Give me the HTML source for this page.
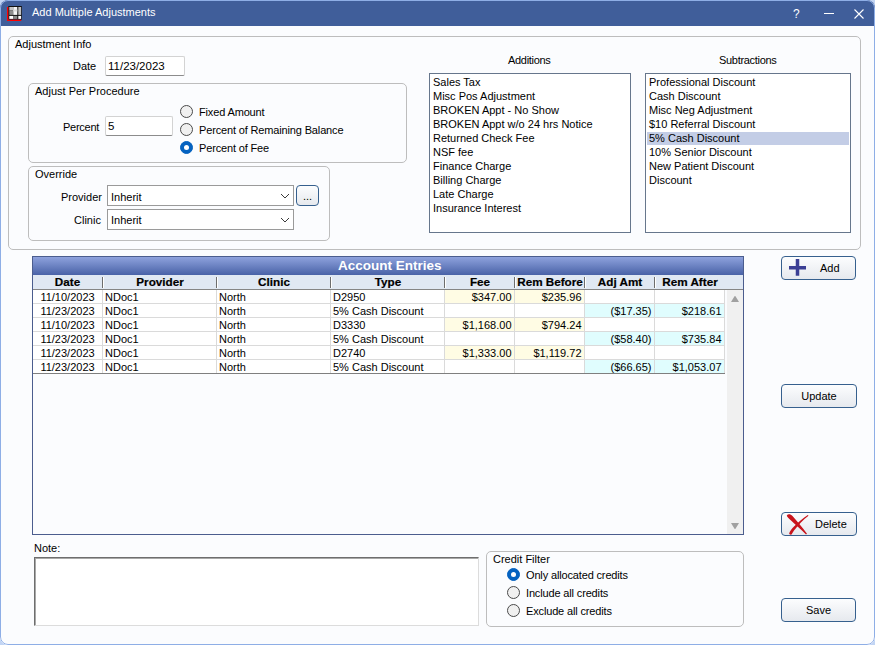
<!DOCTYPE html>
<html><head><meta charset="utf-8">
<style>
*{box-sizing:border-box;margin:0;padding:0}
html,body{width:875px;height:645px;overflow:hidden;background:#c2d5f4}
body{font-family:"Liberation Sans",sans-serif;font-size:11px;color:#000;position:relative}
.a{position:absolute;white-space:nowrap;line-height:13px}
#win{position:absolute;left:0;top:0;width:875px;height:645px;background:#fbfcfe;border-radius:8px 8px 8px 8px;overflow:hidden}
#wb{position:absolute;left:0;top:0;width:875px;height:645px;border:1px solid #8eaee6;border-radius:8px 8px 8px 8px;z-index:50}
#title{position:absolute;left:0;top:0;width:875px;height:26px;background:#405e9a}
.grp{position:absolute;border:1px solid #bdbdbd;border-radius:5px}
.inp{position:absolute;background:#fff;border:1px solid #d3d3d3;border-bottom-color:#8c8c8c;border-radius:2px}
.radio{position:absolute;width:13px;height:13px;border-radius:50%;border:1px solid #4a4a4a;background:#f0f0f0}
.radio.on{background:#0562c0;border-color:#0562c0}
.radio.on:after{content:"";position:absolute;left:3px;top:3px;width:5px;height:5px;border-radius:50%;background:#fff}
.list{position:absolute;background:#fff;border:1px solid #66768c}
.list div{height:14px;line-height:12px;padding-left:2px;white-space:nowrap}
.btn{position:absolute;border:1px solid #36608e;border-radius:4px;background:linear-gradient(#fcfdfe,#e6e9ee);text-align:center;font-size:11px}
#grid{position:absolute;left:32px;top:256px;width:712px;height:279px;border:1px solid #4b5d8e;background:#fbfcfe}
#gtitle{position:absolute;left:0;top:0;width:710px;height:18px;background:linear-gradient(#8ea2dd,#4962a7);color:#fff;font-weight:bold;font-size:13.5px;text-align:center;line-height:18px}
#ghead{position:absolute;left:0;top:18px;width:710px;height:15px;background:#e0e8f3;border-bottom:1px solid #858585}
.hc{position:absolute;top:0;height:14px;line-height:14px;font-weight:bold;font-size:11.7px;text-align:center;-webkit-text-stroke:0.2px #000}
.hs{position:absolute;top:2px;width:2px;height:11px;border-left:1px solid #6e6e6e;border-right:1px solid #fff}
.row{position:absolute;left:0;width:692px;height:13px;background:#fff}
.c{position:absolute;top:0;height:13px;line-height:15px;padding:0 2px;white-space:nowrap}
.r{text-align:right;padding-right:2.5px}
.vl{position:absolute;top:0;width:1px;height:83px;background:#dadada}
.hl{position:absolute;left:0;width:692px;height:1px;background:#d9d9d9}
.y{background:#fffce4}
.cy{background:#e0fdfe}
</style></head><body>
<div id="win">
  <div id="title">
    <svg class="a" style="left:7px;top:6px" width="16" height="16" viewBox="0 0 16 16">
      <rect x="1.3" y="0" width="13.5" height="13.7" fill="#111"/>
      <rect x="2.3" y="1" width="4" height="3.5" fill="#c4c4c4"/><rect x="2.3" y="4.5" width="4" height="4.4" fill="#8e8e8e"/>
      <rect x="6.3" y="1" width="4" height="7.9" fill="#f6f6f6"/><rect x="6.3" y="3.5" width="4" height="2" fill="#dcdcdc"/>
      <rect x="11.3" y="1" width="2.8" height="7.9" fill="#c0c0c0"/>
      <rect x="2.3" y="9.9" width="4" height="3" fill="#fff"/><rect x="6.3" y="9.9" width="4" height="3" fill="#8a8a8a"/><rect x="11.3" y="9.9" width="2.8" height="3" fill="#fff"/>
      <rect x="0" y="1" width="1.3" height="14" fill="#f00"/><rect x="0" y="13.7" width="14.2" height="1.3" fill="#f00"/>
    </svg>
    <div class="a" style="left:32px;top:6px;color:#fff;font-size:11px">Add Multiple Adjustments</div>
    <div class="a" style="left:793px;top:8px;color:#fff;font-size:12px">?</div>
    <div class="a" style="left:824px;top:13px;width:10px;height:1px;background:#fff"></div>
    <svg class="a" style="left:853px;top:8px" width="12" height="12" viewBox="0 0 12 12"><path d="M1.5 1.5L10.5 10.5M10.5 1.5L1.5 10.5" stroke="#fff" stroke-width="1.1"/></svg>
  </div>

  <!-- Adjustment Info -->
  <div class="grp" style="left:8px;top:36px;width:853px;height:214px"></div>
  <div class="a" style="left:15px;top:38px;font-size:11px">Adjustment Info</div>
  <div class="a" style="left:73px;top:60px">Date</div>
  <div class="inp" style="left:105px;top:56px;width:80px;height:20px"></div>
  <div class="a" style="left:108px;top:60px;font-size:11.5px">11/23/2023</div>

  <div class="grp" style="left:28px;top:83px;width:379px;height:80px"></div>
  <div class="a" style="left:35px;top:85px;font-size:11px">Adjust Per Procedure</div>
  <div class="a" style="left:63px;top:121px;letter-spacing:-0.25px">Percent</div>
  <div class="inp" style="left:105px;top:116px;width:68px;height:20px"></div>
  <div class="a" style="left:108px;top:120px;font-size:11.5px">5</div>
  <div class="radio" style="left:180px;top:105px"></div>
  <div class="a" style="left:199px;top:106px;letter-spacing:-0.15px">Fixed Amount</div>
  <div class="radio" style="left:180px;top:123px"></div>
  <div class="a" style="left:199px;top:124px;letter-spacing:-0.15px">Percent of Remaining Balance</div>
  <div class="radio on" style="left:180px;top:141px"></div>
  <div class="a" style="left:199px;top:142px;letter-spacing:-0.15px">Percent of Fee</div>

  <div class="grp" style="left:28px;top:166px;width:302px;height:75px"></div>
  <div class="a" style="left:35px;top:168px;font-size:11px">Override</div>
  <div class="a" style="left:61px;top:191px">Provider</div>
  <div class="inp" style="left:107px;top:185px;width:187px;height:21px;border-color:#9a9a9a;border-radius:0"></div>
  <div class="a" style="left:111px;top:191px">Inherit</div>
  <svg class="a" style="left:280px;top:193px" width="10" height="6" viewBox="0 0 10 6"><path d="M1 1L5 5L9 1" fill="none" stroke="#3a3a3a" stroke-width="1"/></svg>
  <div class="btn" style="left:296px;top:185px;width:23px;height:21px;font-size:11px;line-height:21px;color:#000">...</div>
  <div class="a" style="left:74px;top:214px">Clinic</div>
  <div class="inp" style="left:107px;top:209px;width:187px;height:21px;border-color:#9a9a9a;border-radius:0"></div>
  <div class="a" style="left:111px;top:214px">Inherit</div>
  <svg class="a" style="left:280px;top:217px" width="10" height="6" viewBox="0 0 10 6"><path d="M1 1L5 5L9 1" fill="none" stroke="#3a3a3a" stroke-width="1"/></svg>

  <div class="a" style="left:508px;top:54px;letter-spacing:-0.3px">Additions</div>
  <div class="list" style="left:429px;top:73px;width:202px;height:160px;padding:2px 1px">
    <div>Sales Tax</div><div>Misc Pos Adjustment</div><div>BROKEN Appt - No Show</div><div>BROKEN Appt w/o 24 hrs Notice</div><div>Returned Check Fee</div><div>NSF fee</div><div>Finance Charge</div><div>Billing Charge</div><div>Late Charge</div><div>Insurance Interest</div>
  </div>
  <div class="a" style="left:719px;top:54px;letter-spacing:-0.3px">Subtractions</div>
  <div class="list" style="left:645px;top:73px;width:206px;height:160px;padding:2px 1px">
    <div>Professional Discount</div><div>Cash Discount</div><div>Misc Neg Adjustment</div><div>$10 Referral Discount</div><div style="background:linear-gradient(#c3cde6 13px,transparent 13px)">5% Cash Discount</div><div>10% Senior Discount</div><div>New Patient Discount</div><div>Discount</div>
  </div>

  <!-- Grid -->
  <div id="grid">
    <div id="gtitle"><span style="position:absolute;left:305px">Account Entries</span></div>
    <div id="ghead">
      <div class="hc" style="left:0;width:69px">Date</div>
      <div class="hs" style="left:69px"></div>
      <div class="hc" style="left:71px;width:112px">Provider</div>
      <div class="hs" style="left:183px"></div>
      <div class="hc" style="left:185px;width:112px">Clinic</div>
      <div class="hs" style="left:297px"></div>
      <div class="hc" style="left:299px;width:112px">Type</div>
      <div class="hs" style="left:411px"></div>
      <div class="hc" style="left:413px;width:68px">Fee</div>
      <div class="hs" style="left:481px"></div>
      <div class="hc" style="left:483px;width:68px">Rem Before</div>
      <div class="hs" style="left:551px"></div>
      <div class="hc" style="left:553px;width:68px">Adj Amt</div>
      <div class="hs" style="left:621px"></div>
      <div class="hc" style="left:623px;width:68px">Rem After</div>
    </div>
    <div id="rows" style="position:absolute;left:0;top:33px">
<div class="row" style="top:0px">
<div class="c" style="left:0px;width:69px;text-align:center">11/10/2023</div>
<div class="c" style="left:70px;width:113px">NDoc1</div>
<div class="c" style="left:184px;width:113px">North</div>
<div class="c" style="left:298px;width:113px">D2950</div>
<div class="c r y" style="left:412px;width:69px">$347.00</div>
<div class="c r y" style="left:482px;width:69px">$235.96</div>
<div class="c r" style="left:552px;width:69px"></div>
<div class="c r" style="left:622px;width:69px"></div>
</div>
<div class="hl" style="top:13px;background:#dadada"></div>
<div class="row" style="top:14px">
<div class="c" style="left:0px;width:69px;text-align:center">11/23/2023</div>
<div class="c" style="left:70px;width:113px">NDoc1</div>
<div class="c" style="left:184px;width:113px">North</div>
<div class="c" style="left:298px;width:113px">5% Cash Discount</div>
<div class="c r" style="left:412px;width:69px"></div>
<div class="c r" style="left:482px;width:69px"></div>
<div class="c r cy" style="left:552px;width:69px">($17.35)</div>
<div class="c r cy" style="left:622px;width:69px">$218.61</div>
</div>
<div class="hl" style="top:27px;background:#dadada"></div>
<div class="row" style="top:28px">
<div class="c" style="left:0px;width:69px;text-align:center">11/10/2023</div>
<div class="c" style="left:70px;width:113px">NDoc1</div>
<div class="c" style="left:184px;width:113px">North</div>
<div class="c" style="left:298px;width:113px">D3330</div>
<div class="c r y" style="left:412px;width:69px">$1,168.00</div>
<div class="c r y" style="left:482px;width:69px">$794.24</div>
<div class="c r" style="left:552px;width:69px"></div>
<div class="c r" style="left:622px;width:69px"></div>
</div>
<div class="hl" style="top:41px;background:#dadada"></div>
<div class="row" style="top:42px">
<div class="c" style="left:0px;width:69px;text-align:center">11/23/2023</div>
<div class="c" style="left:70px;width:113px">NDoc1</div>
<div class="c" style="left:184px;width:113px">North</div>
<div class="c" style="left:298px;width:113px">5% Cash Discount</div>
<div class="c r" style="left:412px;width:69px"></div>
<div class="c r" style="left:482px;width:69px"></div>
<div class="c r cy" style="left:552px;width:69px">($58.40)</div>
<div class="c r cy" style="left:622px;width:69px">$735.84</div>
</div>
<div class="hl" style="top:55px;background:#dadada"></div>
<div class="row" style="top:56px">
<div class="c" style="left:0px;width:69px;text-align:center">11/23/2023</div>
<div class="c" style="left:70px;width:113px">NDoc1</div>
<div class="c" style="left:184px;width:113px">North</div>
<div class="c" style="left:298px;width:113px">D2740</div>
<div class="c r y" style="left:412px;width:69px">$1,333.00</div>
<div class="c r y" style="left:482px;width:69px">$1,119.72</div>
<div class="c r" style="left:552px;width:69px"></div>
<div class="c r" style="left:622px;width:69px"></div>
</div>
<div class="hl" style="top:69px;background:#dadada"></div>
<div class="row" style="top:70px">
<div class="c" style="left:0px;width:69px;text-align:center">11/23/2023</div>
<div class="c" style="left:70px;width:113px">NDoc1</div>
<div class="c" style="left:184px;width:113px">North</div>
<div class="c" style="left:298px;width:113px">5% Cash Discount</div>
<div class="c r" style="left:412px;width:69px"></div>
<div class="c r" style="left:482px;width:69px"></div>
<div class="c r cy" style="left:552px;width:69px">($66.65)</div>
<div class="c r cy" style="left:622px;width:69px">$1,053.07</div>
</div>
<div class="hl" style="top:83px;background:#7f7f7f"></div>
<div class="vl" style="left:69px;top:0"></div>
<div class="vl" style="left:183px;top:0"></div>
<div class="vl" style="left:297px;top:0"></div>
<div class="vl" style="left:411px;top:0"></div>
<div class="vl" style="left:481px;top:0"></div>
<div class="vl" style="left:551px;top:0"></div>
<div class="vl" style="left:621px;top:0"></div>
<div class="vl" style="left:691px;top:0"></div>
    </div>
    <div style="position:absolute;left:694px;top:33px;width:16px;height:244px;background:#f0f0f0"></div>
    <svg class="a" style="left:698px;top:39px" width="8" height="6" viewBox="0 0 8 6"><path d="M0 6L3.5 0.3Q4 -0.3 4.5 0.3L8 6Z" fill="#a0a0a0"/></svg>
    <svg class="a" style="left:698px;top:266px" width="8" height="6" viewBox="0 0 8 6"><path d="M0 0L3.5 5.7Q4 6.3 4.5 5.7L8 0Z" fill="#a0a0a0"/></svg>
  </div>

  <div class="btn" style="left:781px;top:256px;width:75px;height:24px;line-height:22px"><svg class="a" style="left:6px;top:2px" width="19" height="18" viewBox="0 0 19 18"><path d="M9.5 0V16.7M1 8.8H18" stroke="#3b3f94" stroke-width="3.5"/></svg><span style="position:absolute;left:38px">Add</span></div>
  <div class="btn" style="left:781px;top:384px;width:76px;height:24px;line-height:22px">Update</div>
  <div class="btn" style="left:781px;top:512px;width:76px;height:24px;line-height:22px"><svg class="a" style="left:-1px;top:-1px" width="40" height="26" viewBox="0 0 40 26"><path d="M5.8 3.5C7 1.8 9.5 2 11.5 4C16 9 21 15 26 21.8L25 22.5C19.5 17 14.5 12.5 9.5 8C7.5 6 6 5 5.8 3.5Z" fill="#c8141c"/><path d="M27.5 3.8C22 8 17 13.5 13 18.5L10.5 22.5C9.5 23 8 22.5 8.2 21.3C9 19 11 16.5 13 14.5C17.5 10 22 6 26.8 3Z" fill="#c8141c"/></svg><span style="position:absolute;left:33px">Delete</span></div>
  <div class="btn" style="left:781px;top:598px;width:75px;height:24px;line-height:22px">Save</div>

  <div class="a" style="left:34px;top:542px">Note:</div>
  <div style="position:absolute;left:34px;top:557px;width:445px;height:69px;background:#fff;border:1px solid #dcdcdc;border-top-color:#6e6e6e;border-left-color:#6e6e6e;box-shadow:inset 1px 1px 0 #a8a8a8"></div>

  <div class="grp" style="left:486px;top:551px;width:258px;height:76px"></div>
  <div class="a" style="left:493px;top:553px;font-size:11px">Credit Filter</div>
  <div class="radio on" style="left:507px;top:568px"></div>
  <div class="a" style="left:526px;top:569px;letter-spacing:-0.15px">Only allocated credits</div>
  <div class="radio" style="left:507px;top:586px"></div>
  <div class="a" style="left:526px;top:587px;letter-spacing:-0.15px">Include all credits</div>
  <div class="radio" style="left:507px;top:604px"></div>
  <div class="a" style="left:526px;top:605px;letter-spacing:-0.15px">Exclude all credits</div>
<div id="wb"></div>
</div>
</body></html>
